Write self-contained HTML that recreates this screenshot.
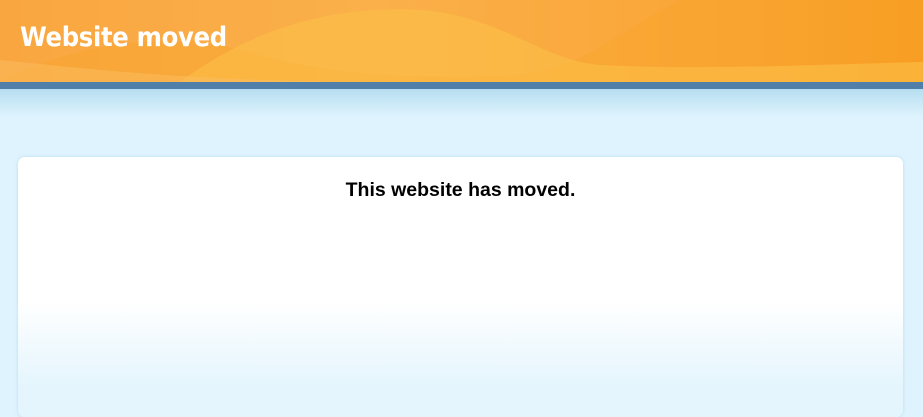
<!DOCTYPE html>
<html><head><meta charset="utf-8"><style>
html,body{margin:0;padding:0;width:923px;height:409px;overflow:hidden;background:#def3fd;font-family:"Liberation Sans",sans-serif}
.hdr{position:absolute;left:0;top:0;width:923px;height:82px;background:linear-gradient(90deg,#f9a640 0%,#fbb04a 40%,#f9a535 80%,#f8991c 100%)}
.hdr h1{position:absolute;left:20px;top:22px;margin:0;color:#fff;font-size:27px;font-weight:bold;letter-spacing:-0.3px;font-family:"DejaVu Sans Condensed","Liberation Sans",sans-serif}
.bar{position:absolute;left:0;top:82px;width:923px;height:7px;background:#5080aa}
.grad{position:absolute;left:0;top:89px;width:923px;height:28px;background:linear-gradient(#b6def0,#def3fd)}
.card{position:absolute;left:18px;top:157px;width:885px;height:260px;border-radius:7px;background:linear-gradient(#fff 0,#fff 145px,#e4f5fd 230px);box-shadow:0 0 3px rgba(150,200,230,.5)}
.card p{margin:0;position:absolute;top:22px;width:100%;text-align:center;font-weight:bold;font-size:19.5px;color:#000}
</style></head><body>
<div class="hdr">
<svg width="923" height="82" style="position:absolute;left:0;top:0">
<path d="M0,82 C80,40 180,30 260,55 C330,75 420,80 520,75 C580,70 620,30 680,0 L923,0 L923,82 Z" fill="#f9a52d" opacity=".45"/>
<path d="M180,82 C250,30 330,5 420,10 C500,15 540,60 600,65 C700,70 800,65 923,62 L923,82 Z" fill="#fbbf48" opacity=".6"/>
<path d="M0,60 C100,70 200,82 400,82 L0,82Z" fill="#fbbd60" opacity=".5"/>
</svg>
<h1>Website moved</h1>
</div>
<div class="bar"></div>
<div class="grad"></div>
<div class="card"><p>This website has moved.</p></div>
</body></html>
